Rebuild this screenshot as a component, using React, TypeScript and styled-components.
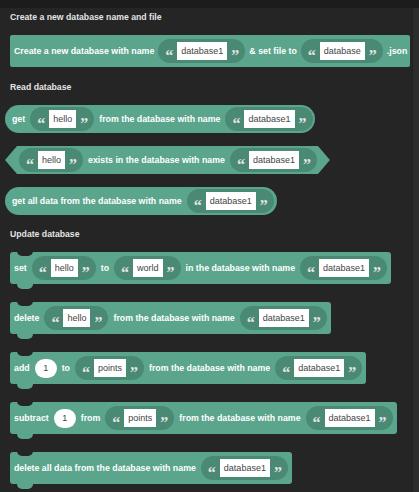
import React from "react";
import styled, { createGlobalStyle, css } from "styled-components";

const GlobalStyle = createGlobalStyle`
  html, body { margin: 0; padding: 0; background: #252525; }
  body { font-family: "Liberation Sans", Arial, sans-serif; }
`;

const GREEN = "#5ba58c";
const DARK = "#4a8a74";
const BG = "#252525";

const Screen = styled.div`
  width: 419px;
  height: 492px;
  display: flex;
  flex-direction: column;
  background: ${BG};
  overflow: hidden;
`;

const TopStrip = styled.div`
  height: 8px;
  background: #1c1c1c;
  flex: none;
`;

const Body = styled.div`
  flex: 1;
  display: flex;
`;

const Panel = styled.div`
  flex: 1;
  display: flex;
  flex-direction: column;
  align-items: flex-start;
  padding-left: 5px;
`;

const Scrollbar = styled.div`
  width: 6px;
  background: #2d2d2d;
  border-left: 1px solid #202020;
`;

const Heading = styled.div<{ $mt: number }>`
  margin: ${(p) => p.$mt}px 0 0 5px;
  font-weight: bold;
  font-size: 8.7px;
  line-height: 12px;
  color: #e4e4e4;
  white-space: nowrap;
`;

type Shape = "plain" | "round" | "hex" | "stack";

const Block = styled.div<{ $shape: Shape; $mt: number; $pl: number; $pr: number; $gap?: number }>`
  position: relative;
  display: flex;
  align-items: center;
  gap: ${(p) => p.$gap ?? 4}px;
  margin-top: ${(p) => p.$mt}px;
  padding: 0 ${(p) => p.$pr}px 0 ${(p) => p.$pl}px;
  background: ${GREEN};
  white-space: nowrap;
  ${(p) =>
    p.$shape === "plain" &&
    css`
      height: 32px;
      margin-left: 5px;
      border-radius: 2px;
    `}
  ${(p) =>
    p.$shape === "round" &&
    css`
      height: 28px;
      border-radius: 14px;
    `}
  ${(p) =>
    p.$shape === "hex" &&
    css`
      height: 28px;
      clip-path: polygon(12px 0, calc(100% - 12px) 0, 100% 50%, calc(100% - 12px) 100%, 12px 100%, 0 50%);
    `}
  ${(p) =>
    p.$shape === "stack" &&
    css`
      height: 32px;
      margin-left: 5px;
      border-radius: 3px;
      &::before {
        content: "";
        position: absolute;
        top: -1px;
        left: 7px;
        width: 16px;
        height: 5px;
        background: ${BG};
        border-radius: 0 0 6px 6px;
      }
      &::after {
        content: "";
        position: absolute;
        top: 100%;
        left: 7px;
        width: 16px;
        height: 5px;
        background: ${GREEN};
        border-radius: 0 0 6px 6px;
      }
    `}
`;

const Label = styled.span`
  font-weight: bold;
  font-size: 8.8px;
  color: #ffffff;
  padding: 0 1px;
`;

const StringInput = styled.span`
  display: flex;
  align-items: center;
  height: 24px;
  padding: 0 7px 0 8px;
  border-radius: 12px;
  background: ${DARK};
`;

const Quote = styled.span<{ $side: "l" | "r" }>`
  display: flex;
  justify-content: center;
  width: 6px;
  height: 14px;
  font-family: "Liberation Serif", "Times New Roman", serif;
  font-weight: bold;
  font-size: 16px;
  line-height: 16px;
  color: #e4e4e4;
  transform: translateY(4px);
  margin: ${(p) => (p.$side === "l" ? "0 5px 0 0" : "0 0 0 5px")};
`;

const Field = styled.span`
  display: flex;
  align-items: center;
  height: 18px;
  padding: 0 4px;
  background: #ffffff;
  font-size: 9px;
  color: #444444;
`;

const NumberField = styled.span`
  display: flex;
  align-items: center;
  justify-content: center;
  width: 22px;
  height: 19px;
  border-radius: 10px;
  background: #ffffff;
  font-size: 9px;
  color: #444444;
`;

const Str = ({ v }: { v: string }) => (
  <StringInput>
    <Quote $side="l">“</Quote>
    <Field>{v}</Field>
    <Quote $side="r">”</Quote>
  </StringInput>
);

export default function App() {
  return (
    <>
      <GlobalStyle />
      <Screen>
        <TopStrip />
        <Body>
          <Panel>
            <Heading $mt={3}>Create a new database name and file</Heading>
            <Block $shape="plain" $mt={12} $pl={3} $pr={2} $gap={3}>
              <Label>Create a new database with name</Label>
              <Str v="database1" />
              <Label>&amp; set file to</Label>
              <Str v="database" />
              <Label>.json</Label>
            </Block>

            <Heading $mt={14}>Read database</Heading>
            <Block $shape="round" $mt={12} $pl={6} $pr={2}>
              <Label>get</Label>
              <Str v="hello" />
              <Label>from the database with name</Label>
              <Str v="database1" />
            </Block>
            <Block $shape="hex" $mt={13} $pl={14} $pr={13}>
              <Str v="hello" />
              <Label>exists in the database with name</Label>
              <Str v="database1" />
            </Block>
            <Block $shape="round" $mt={13} $pl={6} $pr={3}>
              <Label>get all data from the database with name</Label>
              <Str v="database1" />
            </Block>

            <Heading $mt={13}>Update database</Heading>
            <Block $shape="stack" $mt={12} $pl={3} $pr={4}>
              <Label>set</Label>
              <Str v="hello" />
              <Label>to</Label>
              <Str v="world" />
              <Label>in the database with name</Label>
              <Str v="database1" />
            </Block>
            <Block $shape="stack" $mt={18} $pl={3} $pr={4}>
              <Label>delete</Label>
              <Str v="hello" />
              <Label>from the database with name</Label>
              <Str v="database1" />
            </Block>
            <Block $shape="stack" $mt={18} $pl={3} $pr={4}>
              <Label>add</Label>
              <NumberField>1</NumberField>
              <Label>to</Label>
              <Str v="points" />
              <Label>from the database with name</Label>
              <Str v="database1" />
            </Block>
            <Block $shape="stack" $mt={18} $pl={3} $pr={4}>
              <Label>subtract</Label>
              <NumberField>1</NumberField>
              <Label>from</Label>
              <Str v="points" />
              <Label>from the database with name</Label>
              <Str v="database1" />
            </Block>
            <Block $shape="stack" $mt={18} $pl={3} $pr={4}>
              <Label>delete all data from the database with name</Label>
              <Str v="database1" />
            </Block>
          </Panel>
          <Scrollbar />
        </Body>
      </Screen>
    </>
  );
}
